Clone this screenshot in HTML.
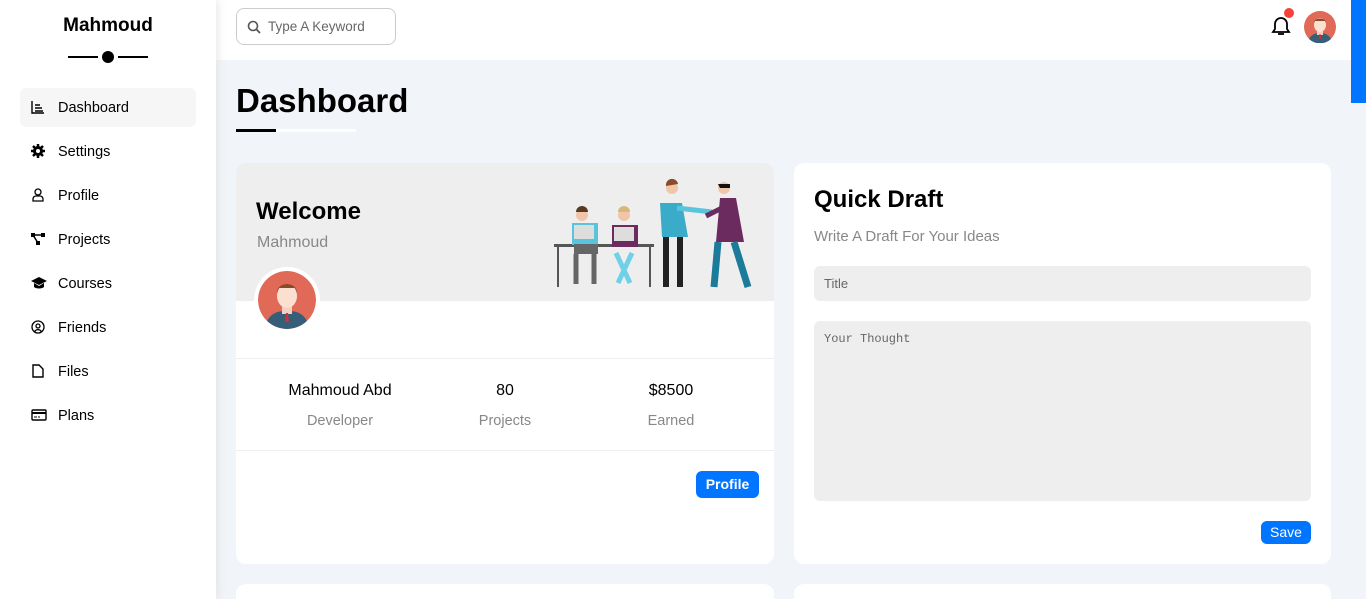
<!DOCTYPE html>
<html style="width:1366px;height:599px;overflow:hidden"><head><meta charset="utf-8"><style>
*{box-sizing:border-box;margin:0;padding:0}
body{width:1366px;height:599px;overflow:hidden;background:#f1f4f8;font-family:"Liberation Sans",sans-serif;position:relative;color:#000}
.side{position:absolute;left:0;top:0;width:216px;height:599px;background:#fff;box-shadow:0 0 10px #ddd;z-index:2}
.logo{position:absolute;top:15px;width:216px;text-align:center;font-weight:bold;font-size:19px}
.ln{position:absolute;top:56px;height:2px;width:30px;background:#000}
.dot{position:absolute;left:102px;top:51px;width:12px;height:12px;border-radius:50%;background:#000}
.nav{position:absolute;left:20px;width:176px;height:39px;font-size:14.5px;display:flex;align-items:center;padding-left:38px;border-radius:6px}
.nav svg{position:absolute;left:11px;top:12px}
.top{position:absolute;left:216px;top:0;width:1135px;height:60px;background:#fff}
.search{position:absolute;left:20px;top:8px;width:160px;height:37px;border:1px solid #ccc;border-radius:8px;font-size:13.5px;color:#666;padding:10px 0 0 31px}
.card{position:absolute;background:#fff;border-radius:10px;overflow:hidden}
.av{border-radius:50%}
.btn{position:absolute;background:#0075ff;color:#fff;font-size:14px;font-weight:bold;border-radius:6px;text-align:center}
.st{position:absolute;text-align:center;width:160px}
.st b{display:block;font-weight:normal;font-size:16px}
.st span{display:block;color:#888;font-size:14.5px;margin-top:13px}
</style></head><body>
<div class="side">
<div class="logo">Mahmoud</div>
<div class="ln" style="left:68px"></div><div class="dot"></div><div class="ln" style="left:118px"></div>
<div class="nav" style="top:88px;background:#f6f6f6"><svg width="14" height="14"><path d="M1 1v12h12M4 5h5M4 8h7M4 11h8" stroke="#000" stroke-width="1.4" fill="none"/></svg>Dashboard</div>
<div class="nav" style="top:132px"><svg width="14" height="14"><circle cx="7" cy="7" r="5" fill="#000"/><path d="M7 0v14M0 7h14M2 2l10 10M12 2L2 12" stroke="#000" stroke-width="2.5"/><circle cx="7" cy="7" r="2" fill="#fff"/></svg>Settings</div>
<div class="nav" style="top:176px"><svg width="14" height="14"><circle cx="7" cy="4" r="3" stroke="#000" fill="none" stroke-width="1.3"/><path d="M2 13v-2a3 3 0 0 1 3-3h4a3 3 0 0 1 3 3v2z" stroke="#000" fill="none" stroke-width="1.3"/></svg>Profile</div>
<div class="nav" style="top:220px"><svg width="14" height="14"><rect x="0" y="1" width="4" height="4" fill="#000"/><rect x="10" y="1" width="4" height="4" fill="#000"/><rect x="5" y="9" width="4" height="4" fill="#000"/><path d="M2 3h10M2 3l5 8" stroke="#000" stroke-width="1.5"/></svg>Projects</div>
<div class="nav" style="top:264px"><svg width="16" height="14"><path d="M0 5l8-4 8 4-8 4z" fill="#000"/><path d="M3 7v4c2 2 8 2 10 0V7l-5 3z" fill="#000"/></svg>Courses</div>
<div class="nav" style="top:308px"><svg width="14" height="14"><circle cx="7" cy="7" r="6" stroke="#000" fill="none" stroke-width="1.3"/><circle cx="7" cy="6" r="2" stroke="#000" fill="none" stroke-width="1.3"/><path d="M3.5 11.5c2-2.5 5-2.5 7 0" stroke="#000" fill="none" stroke-width="1.3"/></svg>Friends</div>
<div class="nav" style="top:352px"><svg width="14" height="14"><path d="M2 1h6l4 4v8H2z" stroke="#000" fill="none" stroke-width="1.4"/></svg>Files</div>
<div class="nav" style="top:396px"><svg width="16" height="14"><rect x="1" y="2" width="14" height="10" rx="1" stroke="#000" fill="none" stroke-width="1.4"/><path d="M1 5h14" stroke="#000" stroke-width="2"/><path d="M3 9h3M7 9h2" stroke="#000"/></svg>Plans</div>
</div>
<div class="top">
<div class="search"><svg style="position:absolute;left:10px;top:11px" width="14" height="14"><circle cx="6" cy="6" r="4.5" stroke="#555" fill="none" stroke-width="1.6"/><path d="M9.5 9.5L13 13" stroke="#555" stroke-width="1.8"/></svg>Type A Keyword</div>
<svg style="position:absolute;left:1054px;top:15px" width="22" height="22"><path d="M3 17h16l-2-3V9a6 6 0 0 0-12 0v5z" stroke="#000" stroke-width="1.8" fill="none"/><path d="M8 19h6" stroke="#000" stroke-width="1.8"/></svg>
<div style="position:absolute;left:1068px;top:8px;width:10px;height:10px;border-radius:50%;background:#f44336"></div>
<svg style="position:absolute;left:1088px;top:11px" width="32" height="32"><circle cx="16" cy="16" r="16" fill="#e06a57"/><path d="M5 28c3-5 7-6 11-6s8 1 11 6a16 16 0 0 1-22 0z" fill="#365e78"/><rect x="13" y="18" width="6" height="6" fill="#f4d0c0"/><ellipse cx="16" cy="14" rx="6" ry="7" fill="#fbe0d2"/><path d="M10 12c0-6 12-6 12 0l-1-2c-3 0-7 0-10 0z" fill="#8a4b2a"/><path d="M15.5 23h1l.5 5h-2z" fill="#c33"/></svg>
</div>
<div style="position:absolute;left:1351px;top:0;width:15px;height:103px;background:#0075ff"></div>
<div style="position:absolute;left:236px;top:82px;font-size:33px;font-weight:bold">Dashboard</div>
<div style="position:absolute;left:236px;top:129px;width:120px;height:3px;background:#fff"></div>
<div style="position:absolute;left:236px;top:129px;width:40px;height:3px;background:#000"></div>

<div class="card" style="left:236px;top:163px;width:538px;height:401px">
<div style="position:absolute;left:0;top:0;width:538px;height:138px;background:#eee"></div>
<div style="position:absolute;left:20px;top:35px;font-size:24px;font-weight:bold">Welcome</div>
<div style="position:absolute;left:21px;top:71px;font-size:16px;color:#888">Mahmoud</div>
<svg style="position:absolute;left:316px;top:15px" width="206" height="115">
<rect x="2" y="66" width="100" height="3" fill="#555"/><path d="M6 69v40M98 69v40" stroke="#555" stroke-width="2"/>
<rect x="20" y="45" width="26" height="22" fill="#5bc4dd"/><circle cx="30" cy="37" r="6" fill="#f0c6a8"/><path d="M24 34a6 6 0 0 1 12 0z" fill="#5a3a22"/><rect x="22" y="66" width="24" height="10" fill="#666"/><path d="M24 76v30M42 76v30" stroke="#666" stroke-width="5"/><rect x="22" y="47" width="20" height="14" fill="#ddd"/>
<rect x="60" y="47" width="26" height="22" fill="#6b2b5e"/><circle cx="72" cy="37" r="6" fill="#f0c6a8"/><path d="M66 34a6 6 0 0 1 12 0z" fill="#d8b77a"/><path d="M64 75l14 30M80 75l-14 30" stroke="#6fd0e8" stroke-width="5"/><rect x="62" y="49" width="20" height="14" fill="#ddd"/>
<path d="M108 25h22l6 34h-26z" fill="#3aabc9"/><circle cx="120" cy="10" r="6" fill="#f0c6a8"/><path d="M114 8a6 6 0 0 1 12 -2z" fill="#8a4b2a"/><path d="M125 30l35 4" stroke="#5bc4dd" stroke-width="5"/><path d="M114 59v50M128 59v50" stroke="#222" stroke-width="6"/>
<path d="M168 20h16l8 44h-28z" fill="#6b2b5e"/><circle cx="172" cy="10" r="6" fill="#f0c6a8"/><path d="M166 6h12v4h-10z" fill="#111"/><path d="M170 30l-16 8" stroke="#6b2b5e" stroke-width="5"/><path d="M166 64l-4 45M182 64l14 45" stroke="#1c7a9a" stroke-width="7"/>
</svg>
<svg class="av" style="position:absolute;left:22px;top:108px;box-shadow:0 0 0 4px #fff" width="58" height="58"><circle cx="29" cy="29" r="29" fill="#e06a57"/><path d="M9 50c5-9 12-10 20-10s15 1 20 10a29 29 0 0 1-40 0z" fill="#365e78"/><rect x="24" y="33" width="10" height="10" fill="#f4d0c0"/><ellipse cx="29" cy="25" rx="10" ry="12" fill="#fbe0d2"/><path d="M19 22c0-12 20-12 20 0l-2-5c-6 0-10 0-16 0z" fill="#8a4b2a"/><path d="M28 42h2l1 9h-4z" fill="#c33"/></svg>
<div style="position:absolute;left:0;top:195px;width:538px;height:1px;background:#eee"></div>
<div class="st" style="left:24px;top:219px"><b>Mahmoud Abd</b><span>Developer</span></div>
<div class="st" style="left:189px;top:219px"><b>80</b><span>Projects</span></div>
<div class="st" style="left:355px;top:219px"><b>$8500</b><span>Earned</span></div>
<div style="position:absolute;left:0;top:287px;width:538px;height:1px;background:#eee"></div>
<div class="btn" style="left:460px;top:308px;width:63px;height:27px;line-height:27px">Profile</div>
</div>

<div class="card" style="left:794px;top:163px;width:537px;height:401px">
<div style="position:absolute;left:20px;top:23px;font-size:24px;font-weight:bold">Quick Draft</div>
<div style="position:absolute;left:20px;top:65px;font-size:15px;color:#888">Write A Draft For Your Ideas</div>
<div style="position:absolute;left:20px;top:103px;width:497px;height:35px;background:#eee;border-radius:6px;font-size:13px;color:#666;padding:10px 10px">Title</div>
<div style="position:absolute;left:20px;top:158px;width:497px;height:180px;background:#eee;border-radius:6px;font-family:'Liberation Mono',monospace;font-size:12px;color:#666;padding:11px 10px">Your Thought</div>
<div class="btn" style="left:467px;top:358px;width:50px;height:23px;line-height:23px;font-weight:normal">Save</div>
</div>
<div class="card" style="left:236px;top:584px;width:538px;height:15px;border-radius:10px 10px 0 0"></div>
<div class="card" style="left:794px;top:584px;width:537px;height:15px;border-radius:10px 10px 0 0"></div>
</body></html>
